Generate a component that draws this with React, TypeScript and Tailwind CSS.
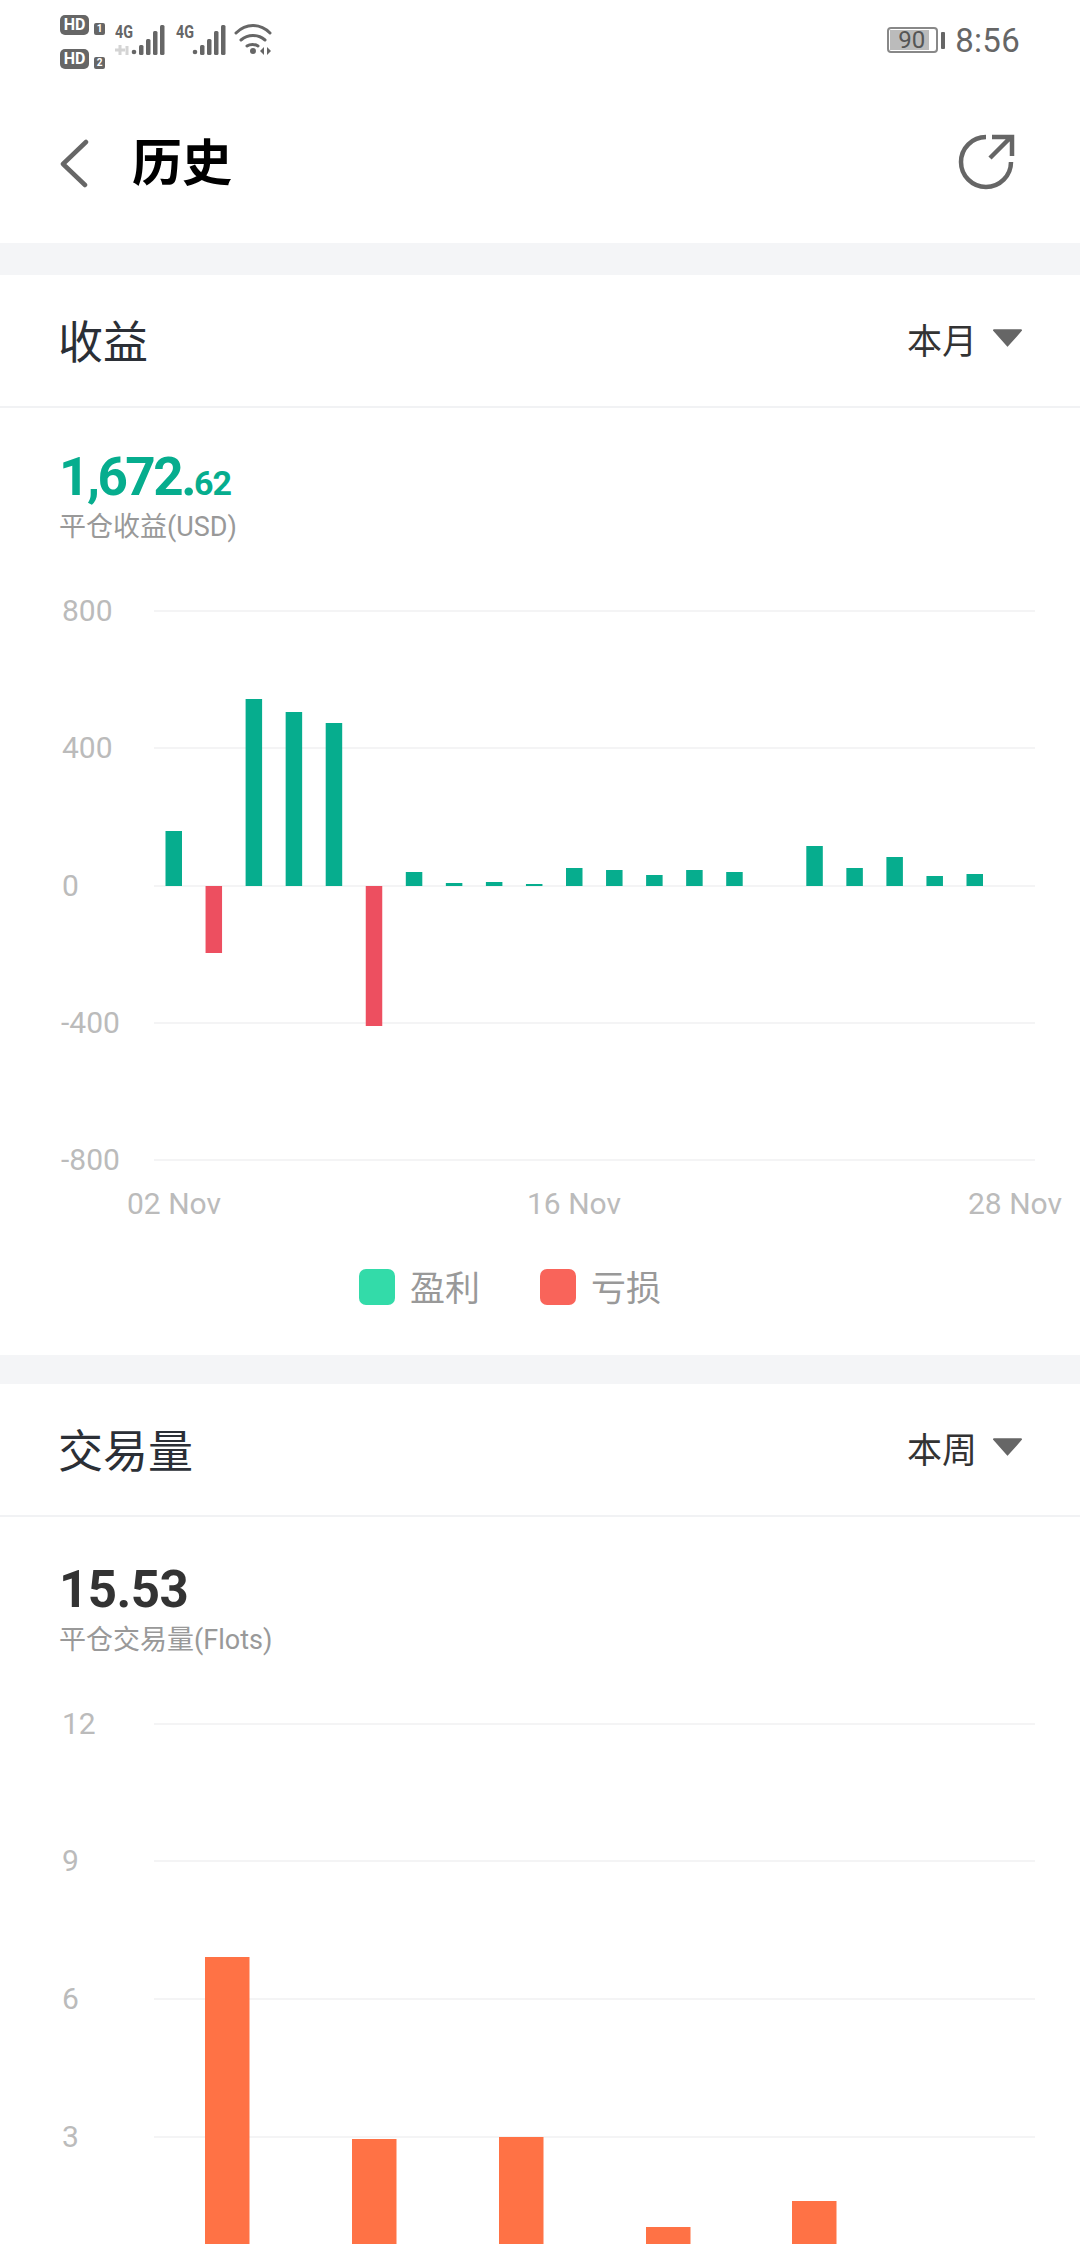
import React from 'react';

const fontStack = "font-['Roboto','Noto_Sans_CJK_SC',sans-serif]";

// profit chart: bars start at x=166 with a 40.1 pitch, values are pixels from the zero line
const profitBars = [55, -67, 187, 174, 163, -140, 14, 3, 4, 2, 18, 16, 11, 16, 14, 0, 40, 18, 29, 10, 12];
const volumeBars = [
  { x: 205, top: 1957 },
  { x: 352, top: 2139 },
  { x: 499, top: 2137 },
  { x: 646, top: 2227 },
  { x: 792, top: 2201 },
];

const StatusBar: React.FC = () => (
  <div className="h-[88px] flex justify-between pl-[60px] pr-[60px]">
    <div className="flex">
      <div className="flex flex-col gap-[14px] pt-[15px] w-[55px]">
        {['1', '2'].map((n) => (
          <div key={n} className="flex items-end gap-[5px]">
            <div className="w-[29px] h-[20px] rounded-[5px] bg-[#666] text-white text-[16px] font-bold leading-[20px] text-center">HD</div>
            <div className="w-[11px] h-[12px] rounded-[2px] bg-[#666] text-white text-[10px] font-bold leading-[12px] text-center">{n}</div>
          </div>
        ))}
      </div>
      <svg width="160" height="60" viewBox="115 0 160 60" fill="#666" className="block">
        <text x="115" y="38" fontSize="19" fontWeight="700" fontFamily="Roboto" textLength="18" lengthAdjust="spacingAndGlyphs">4G</text>
        <text x="176" y="38" fontSize="19" fontWeight="700" fontFamily="Roboto" textLength="18" lengthAdjust="spacingAndGlyphs">4G</text>
        <path d="M115 50h10M120 45v10M127 46v9" stroke="#d4d4d4" strokeWidth="3" fill="none" />
        {[132, 193].map((x0) => (
          <g key={x0}>
            <circle cx={x0 + 2} cy={52} r={2.3} />
            <rect x={x0 + 7} y={45} width={4.5} height={10} rx={1.5} />
            <rect x={x0 + 14} y={39} width={4.5} height={16} rx={1.5} />
            <rect x={x0 + 21} y={31} width={4.5} height={24} rx={1.5} />
            <rect x={x0 + 28} y={25} width={4.5} height={30} rx={1.5} />
          </g>
        ))}
        <path d="M236 33c10-10 24-10 34 0M241 40c7-6 17-6 24 0M247 46c3-2 8-2 11 0" stroke="#666" strokeWidth="3" fill="none" strokeLinecap="round" />
        <circle cx="253" cy="51" r="3" />
        <path d="M264 47v8l-4-4zM267 47v8l4-4z" />
      </svg>
    </div>
    <div className="flex items-start pt-[27px]">
      <div className="relative w-[51px] h-[26px] rounded-[4px] border-2 border-[#888] p-[1px]">
        <div className="w-[39px] h-[20px] bg-[#bbb]" />
        <span className="absolute left-[9px] top-[-3px] text-[24px] leading-[28px] text-[#555]">90</span>
      </div>
      <div className="w-[4px] h-[17px] bg-[#666] rounded-[1px] ml-[3px] mt-[5px]" />
      <span className="ml-[10px] text-[33px] leading-[28px] text-[#666] tracking-[0.3px]">8:56</span>
    </div>
  </div>
);

const NavBar: React.FC = () => (
  <div className="h-[155px] flex items-start justify-between">
    <div className="flex items-center h-[152px]">
      <svg width="30" height="50" viewBox="60 137 30 50" className="ml-[60px]" fill="none" stroke="#666" strokeWidth="4.5" strokeLinecap="round" strokeLinejoin="round">
        <path d="M86 140 63 162 85 183" />
      </svg>
      <h1 className="ml-[42px] text-[50px] font-bold text-black leading-[60px]">历史</h1>
    </div>
    <svg width="60" height="60" viewBox="956 132 60 60" className="mr-[64px] mt-[44px]" fill="none" stroke="#666" strokeWidth="4.5">
      <path d="M986 137a25 25 0 1 0 25 25" />
      <path d="M992 137h20v19M1011 137l-21 21" />
    </svg>
  </div>
);

const SectionHeader: React.FC<{ title: string; range: string }> = ({ title, range }) => (
  <div className="h-[133px] border-b-2 border-[#f1f2f4] flex items-center justify-between pl-[58px] pr-[58px]">
    <h2 className="text-[45px] text-[#2b2f36] font-normal pt-[6px]">{title}</h2>
    <div className="flex items-center gap-[16px]">
      <span className="text-[35px] text-[#333] pt-[6px]">{range}</span>
      <svg width="29" height="18" viewBox="0 0 30 18" className="mb-[6px]">
        <path d="M1 0h28a1 1 0 0 1 .8 1.6L15.8 17.4a1 1 0 0 1-1.6 0L.2 1.6A1 1 0 0 1 1 0z" fill="#666" />
      </svg>
    </div>
  </div>
);

const gridLine = (y: number) => <line key={y} x1={154} x2={1035} y1={y} y2={y} stroke="#f4f4f5" strokeWidth={2} />;
const axisText = 'fill-[#bbbbbb] text-[30px]';

const ProfitChart: React.FC = () => (
  <svg width="1080" height="680" viewBox="0 560 1080 680" className="block">
    {[611, 748, 886, 1023, 1160].map(gridLine)}
    {[['800', 610], ['400', 747], ['0', 885], ['-400', 1022], ['-800', 1159]].map(([t, y]) => (
      <text key={t} x={t === '-400' || t === '-800' ? 61 : 62} y={Number(y) + 11} className={axisText}>{t}</text>
    ))}
    {profitBars.map((v, i) =>
      v === 0 ? null : (
        <rect key={i} x={165.5 + i * 40.05} width={16.5} y={v > 0 ? 886 - v : 886} height={Math.abs(v)} fill={v > 0 ? '#06ad8e' : '#ed4f60'} />
      ),
    )}
    <text x={127} y={1214} className={axisText}>02 Nov</text>
    <text x={527} y={1214} className={axisText}>16 Nov</text>
    <text x={968} y={1214} className={axisText}>28 Nov</text>
  </svg>
);

const VolumeChart: React.FC = () => (
  <svg width="1080" height="564" viewBox="0 1700 1080 564" className="block">
    {[1724, 1861, 1999, 2137].map(gridLine)}
    {[['12', 1723], ['9', 1860], ['6', 1998], ['3', 2136]].map(([t, y]) => (
      <text key={t} x={62} y={Number(y) + 11} className={axisText}>{t}</text>
    ))}
    {volumeBars.map((b) => (
      <rect key={b.x} x={b.x} y={b.top} width={44.5} height={2275 - b.top} fill="#ff7245" />
    ))}
  </svg>
);

const Legend: React.FC = () => (
  <div className="h-[115px] pt-[29px] pr-[60px] flex justify-center gap-[60px]">
    <div className="flex items-center gap-[15px] h-[36px]">
      <div className="w-[36px] h-[36px] rounded-[7px] bg-[#33dba9]" />
      <span className="text-[35px] text-[#999] pt-[6px]">盈利</span>
    </div>
    <div className="flex items-center gap-[15px] h-[36px]">
      <div className="w-[36px] h-[36px] rounded-[7px] bg-[#f9645a]" />
      <span className="text-[35px] text-[#999] pt-[6px]">亏损</span>
    </div>
  </div>
);

const App: React.FC = () => (
  <div className={`w-[1080px] h-[2244px] overflow-hidden bg-white ${fontStack}`}>
    <StatusBar />
    <NavBar />
    <div className="h-[32px] bg-[#f4f5f7]" />

    <SectionHeader title="收益" range="本月" />
    <div className="pl-[59px] pt-[41px]">
      <div className="h-[56px] leading-[56px] font-bold text-[#06ad8e] text-[53px] tracking-[-2.5px]">
        1,672.<span className="text-[34px] tracking-[-1px]">62</span>
      </div>
      <div className="mt-[4px] text-[27px] leading-[36px] text-[#999]">平仓收益(USD)</div>
    </div>
    <div className="h-[15px]" />
    <ProfitChart />
    <Legend />

    <div className="h-[29px] bg-[#f4f5f7]" />

    <SectionHeader title="交易量" range="本周" />
    <div className="pl-[59px] pt-[45px]">
      <div className="h-[56px] leading-[56px] font-bold text-[#333] text-[51px] tracking-[-0.5px]">15.53</div>
      <div className="mt-[4px] text-[27px] leading-[36px] text-[#999]">平仓交易量(Flots)</div>
    </div>
    <div className="h-[42px]" />
    <VolumeChart />
  </div>
);

export default App;
